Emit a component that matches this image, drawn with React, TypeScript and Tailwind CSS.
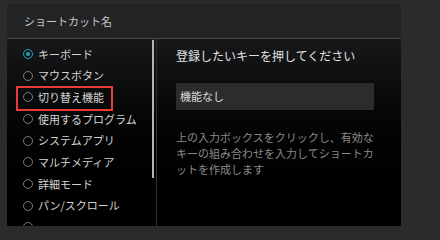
import React from 'react';

const items = [
  'キーボード',
  'マウスボタン',
  '切り替え機能',
  '使用するプログラム',
  'システムアプリ',
  'マルチメディア',
  '詳細モード',
  'パン/スクロール',
  '',
];

const font = { fontFamily: '"Noto Sans CJK JP", "Noto Sans", sans-serif' };

export default function App() {
  const selected = 0;

  return (
    <div className="relative w-[440px] h-[240px] bg-[#2b2b2b] pt-[4px] pl-[7px] overflow-hidden" style={font}>
      <div className="w-[394px] h-[222px] flex flex-col bg-gradient-to-b from-[#202123] to-[#000000] overflow-hidden">
        {/* ヘッダー */}
        <div className="h-[35px] shrink-0 flex items-center pl-[17px] bg-[#222325] border-b border-[#4a4b4d] text-[11px] text-[#c8c8c8]">
          ショートカット名
        </div>

        <div className="flex flex-1 min-h-0">
          {/* 左: 種類リスト */}
          <div className="w-[150px] shrink-0 flex border-r border-[#2e2f31]">
            <ul className="flex-1 pt-[4px] pl-[16px]">
              {items.map((label, i) => (
                <li key={i} className="h-[21.7px] flex items-center gap-[5px] text-[11px] text-[#d4d4d4]">
                  {i === selected ? (
                    <span className="w-[10px] h-[10px] rounded-full border border-[#1ba6b5] flex items-center justify-center">
                      <span className="w-[4px] h-[4px] rounded-full bg-[#1ba6b5]" />
                    </span>
                  ) : (
                    <span className="w-[10px] h-[10px] rounded-full border border-[#7a7a7a]" />
                  )}
                  {label && <span>{label}</span>}
                </li>
              ))}
            </ul>
            {/* スクロールバー */}
            <div className="w-[2px] mr-[2px] pt-[1px]">
              <div className="h-[138px] bg-[#b4b4b4]" />
            </div>
          </div>

          {/* 右: 入力エリア */}
          <div className="flex-1 pl-[19px] pt-[9px]">
            <div className="text-[12px] leading-[16px] text-[#e2e2e2]">登録したいキーを押してください</div>
            <div className="mt-[19px] w-[198px] h-[27px] bg-[#2c2c2c] flex items-center pl-[4px] text-[11px] text-[#dcdcdc]">
              機能なし
            </div>
            <p className="mt-[19px] w-[200px] text-[11px] leading-[16px] text-[#8a8a8a]">
              上の入力ボックスをクリックし、有効なキーの組み合わせを入力してショートカットを作成します
            </p>
          </div>
        </div>
      </div>

      {/* 赤枠 */}
      <div className="absolute left-[16px] top-[86px] w-[97px] h-[25px] border-2 border-[#ea3b3b]" />
    </div>
  );
}
